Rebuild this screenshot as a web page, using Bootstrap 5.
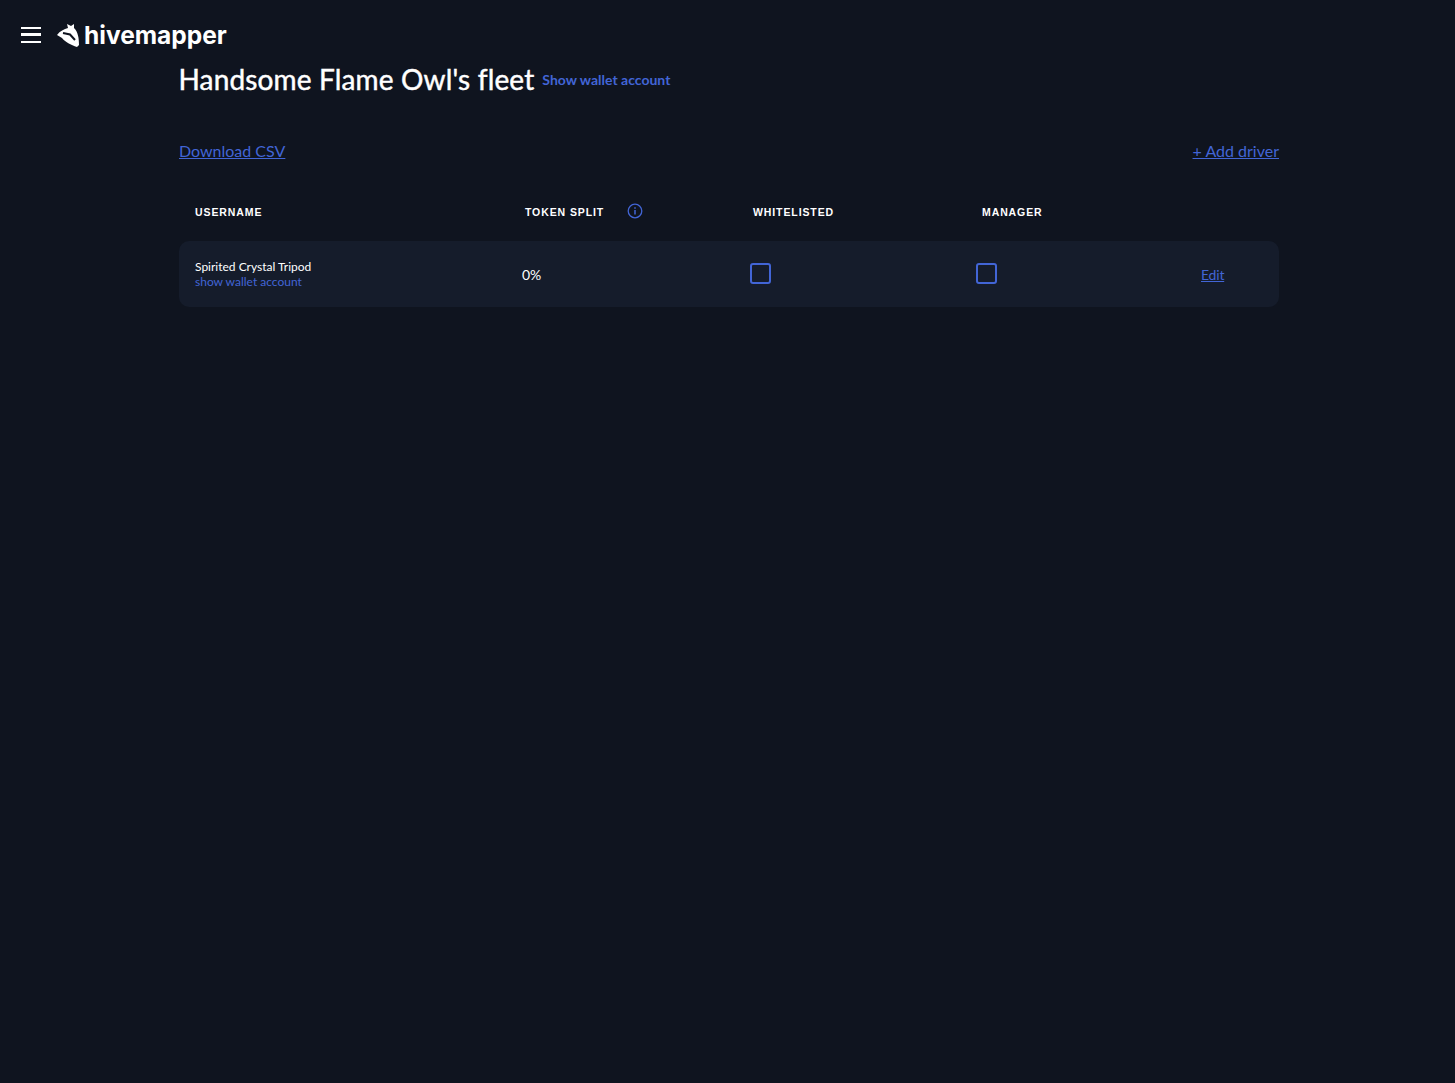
<!DOCTYPE html>
<html lang="en">
<head>
    <meta charset="UTF-8" />
    <title>Fleet</title>
    <link href="https://cdn.jsdelivr.net/npm/bootstrap@5.3.2/dist/css/bootstrap.min.css" rel="stylesheet">
    <style>
        body { background: #0f141f; color: #fff; font-family: "Lato", sans-serif; min-height: 1083px; }
        a { color: #4265d6; }
        .top-bar { height: 70px; padding-left: 21px; gap: 16px; }
        .burger { width: 20px; height: 16px; border-top: 2.5px solid #fff; border-bottom: 2.5px solid #fff; }
        .burger::after { content: ""; display: block; height: 2.5px; background: #fff; margin-top: 4.25px; }
        .brand { gap: 4px; }
        .brand-name { font-family: "Inter", sans-serif; font-weight: 700; font-size: 24.5px; line-height: 1; }
        .fleet-wrap { width: 1100px; margin-left: 179px; margin-top: -8px; }
        .fleet-title { font-size: 28px; font-weight: 400; line-height: 34px; margin: 0 0 0 -.5px; letter-spacing: .15px; -webkit-text-stroke: .45px #fff; }
        .wallet-top { font-size: 14px; font-weight: 700; text-decoration: none; }
        .action-row { margin-top: 43px; font-size: 16px; line-height: 24px; }
        .head-row, .driver-row { display: grid; align-items: center; }
        .head-row { grid-template-columns: 330px 228px 229px 1fr; margin-top: 35px; height: 30px; padding-left: 16px; }
        .head-cell { font-family: "Liberation Sans", sans-serif; font-weight: 700; font-size: 10.5px; letter-spacing: .9px; }
        .info-gap { gap: 23px; }
        .info-gap svg { margin-top: -4px; }
        .driver-row { grid-template-columns: 327px 228px 226px 225px 1fr; margin-top: 13px; height: 66px; padding-left: 16px; background: #151c2b; border-radius: 10px; }
        .driver-name { font-size: 12px; line-height: 15px; }
        .driver-wallet { display: block; font-size: 12px; line-height: 15px; text-decoration: none; }
        .pct { font-size: 14px; }
        .tick { width: 21px; height: 21px; border: 2.5px solid #4265d6; border-radius: 3px; display: block; margin: -1px 0 0 -.5px; }
        .edit-link { font-size: 14px; letter-spacing: -.2px; }
    </style>
</head>
<body>

<!-- Navbar -->
<nav class="top-bar d-flex align-items-center">
    <div class="burger"></div>
    <div class="brand d-flex align-items-center">
        <svg width="23" height="25" viewBox="0 0 23 25">
            <path fill="#fff" d="M0 12 C3 8 7 6 11 5 L10 1 L14 3 L17 1 L17 5 C21 9 22 15 22 22 L20 24 C14 22 8 19 5 15 Z"/>
            <path fill="none" stroke="#0f141f" stroke-width="2" d="M6 10 L13 11.5 L18 17"/>
        </svg>
        <span class="brand-name">hivemapper</span>
    </div>
</nav>

<!-- Main Content -->
<div class="fleet-wrap">
    <div class="d-flex align-items-center gap-2">
        <h1 class="fleet-title">Handsome Flame Owl's fleet</h1>
        <a class="wallet-top" href="#">Show wallet account</a>
    </div>

    <div class="action-row d-flex justify-content-between">
        <a href="#">Download CSV</a>
        <a href="#">+ Add driver</a>
    </div>

    <div class="head-row">
        <div class="head-cell">USERNAME</div>
        <div class="head-cell info-gap d-flex align-items-center">
            <span>TOKEN SPLIT</span>
            <svg width="16" height="16" viewBox="0 0 16 16" fill="none" stroke="#4265d6">
                <circle cx="8" cy="8" r="6.8" stroke-width="1.3"/>
                <path d="M8 7v4.5" stroke-width="1.5"/>
                <path d="M8 4.2v1.5" stroke-width="1.5"/>
            </svg>
        </div>
        <div class="head-cell">WHITELISTED</div>
        <div class="head-cell">MANAGER</div>
    </div>

    <div class="driver-row">
        <div>
            <div class="driver-name">Spirited Crystal Tripod</div>
            <a class="driver-wallet" href="#">show wallet account</a>
        </div>
        <div class="pct">0%</div>
        <div><span class="tick"></span></div>
        <div><span class="tick"></span></div>
        <div><a class="edit-link" href="#">Edit</a></div>
    </div>
</div>

</body>
</html>
